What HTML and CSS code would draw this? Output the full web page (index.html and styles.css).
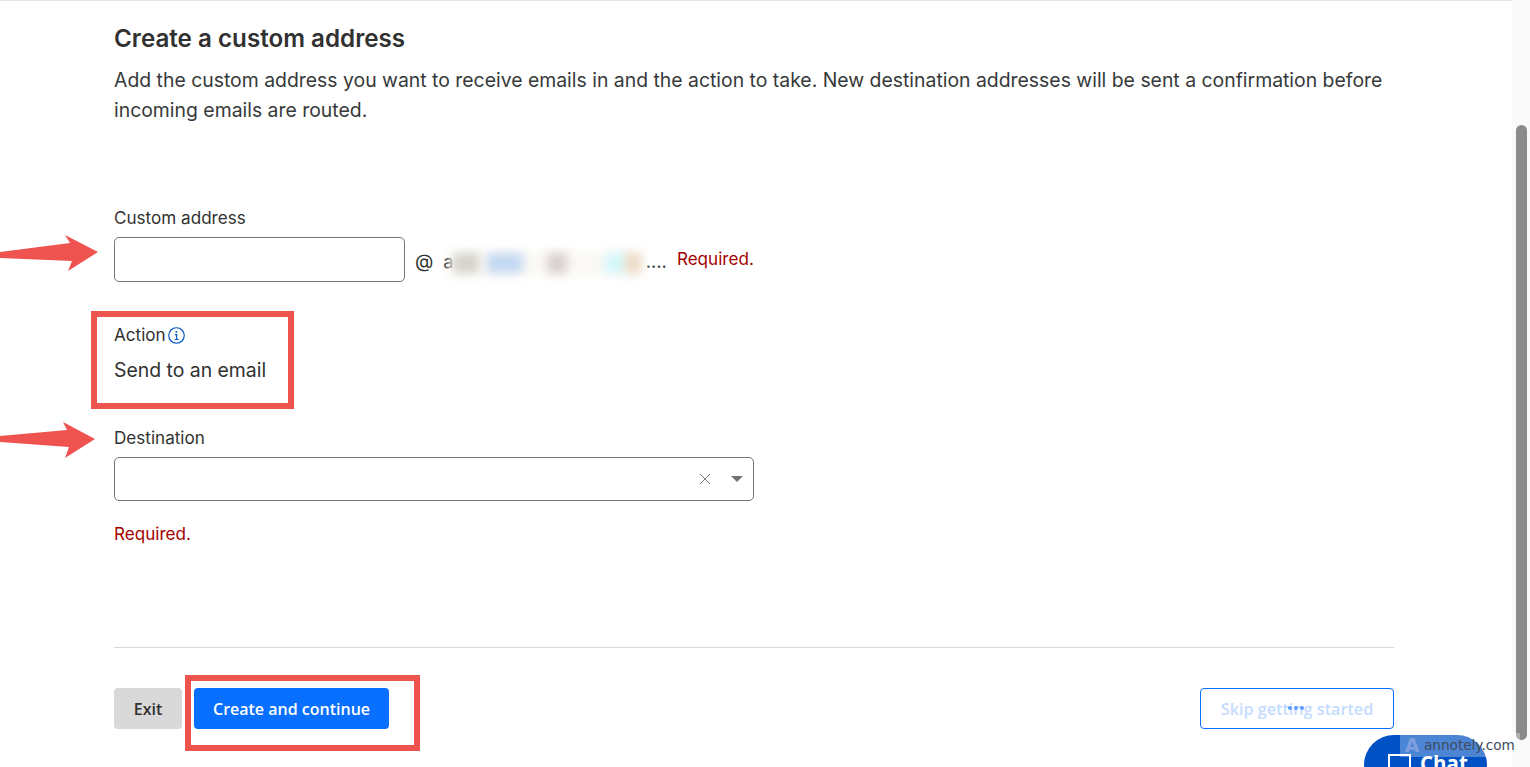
FILE: index.html
```html
<!DOCTYPE html>
<html lang="en">

<head>
    <meta charset="UTF-8">
    <meta name="viewport" content="width=device-width, initial-scale=1.0">
    <title>Create a custom address</title>
    <link rel="stylesheet" href="styles.css">
</head>

<body>
    <div class="page">
        <main class="content">
            <h2 class="title">Create a custom address</h2>
            <p class="intro">Add the custom address you want to receive emails in and the action to take. New destination addresses will be sent a confirmation before incoming emails are routed.</p>

            <div class="field-custom">
                <label class="label" for="custom">Custom address</label>
                <div class="address-row">
                    <input class="input" id="custom" type="text">
                    <span class="at">@</span>
                    <span class="domain">a<span class="smudges">
                        <i class="smudge s0"></i><i class="smudge s1"></i><i class="smudge s2"></i><i class="smudge s3"></i><i class="smudge s4"></i><i class="smudge s5"></i>
                    </span>....</span>
                    <span class="error error-inline">Required.</span>
                </div>
            </div>

            <div class="field-action">
                <div class="label action-label">Action
                    <svg class="info" viewBox="0 0 16 16" width="17" height="17" fill="none" stroke="#0051c3">
                        <circle cx="8" cy="8" r="7.3" stroke-width="1.1" />
                        <path d="M6.4 7.1H8.2V11.6M6.2 11.8H10" stroke-width="1.1" />
                        <circle cx="7.9" cy="4.6" r="0.9" fill="#0051c3" stroke="none" />
                    </svg>
                </div>
                <div class="action-value">Send to an email</div>
            </div>

            <div class="field-destination">
                <div class="label">Destination</div>
                <div class="select">
                    <svg class="clear" viewBox="0 0 12 12" width="12" height="12" stroke="#7b7b7b" stroke-width="1">
                        <path d="M1 1L11 11M11 1L1 11" />
                    </svg>
                    <span class="caret"></span>
                </div>
                <div class="error error-block">Required.</div>
            </div>

            <div class="actions">
                <button class="btn btn-exit" type="button">Exit</button>
                <button class="btn btn-create" type="button">Create and continue</button>
                <button class="btn btn-skip" type="button">Skip getting started
                    <span class="dots"><i></i><i></i><i></i></span>
                </button>
            </div>
        </main>

        <div class="scrollbar"><div class="thumb"></div></div>
    </div>

    <!-- annotations drawn over the screenshot -->
    <svg class="arrow arrow-1" viewBox="0 0 100 38" width="100" height="38">
        <path d="M0 17L70 8L65 0L98 17L68 36L72 26L0 23Z" fill="#ef5350" />
    </svg>
    <svg class="arrow arrow-2" viewBox="0 0 95 38" width="95" height="38">
        <path d="M0 14L67 8L63 0L95 17L65 36L69 25L0 20Z" fill="#ef5350" />
    </svg>
    <div class="box box-action"></div>
    <div class="box box-create"></div>

    <button class="chat" type="button">
        <span class="chat-icon"></span>Chat
    </button>
    <div class="watermark">
        <span class="watermark-logo">A</span>annotely.com
    </div>
</body>

</html>
```

FILE: styles.css
```css
* {
    box-sizing: border-box;
}

html,
body {
    margin: 0;
    height: 100%;
    overflow: hidden;
}

body {
    background: #fff;
    color: #313131;
    font-family: Inter, "Liberation Sans", sans-serif;
}

.page {
    display: flex;
    height: 767px;
}

.content {
    flex: 1;
    padding: 0 118px 0 114px;
    border-top: 1px solid #e5e5e5;
}

.title {
    margin: 23px 0 0;
    font-size: 24.2px;
    line-height: 30px;
    font-weight: 600;
}

.intro {
    margin: 11px 0 0;
    font-size: 19.4px;
    line-height: 30px;
    color: #36393a;
}

.label {
    font-size: 17.1px;
    line-height: 20px;
}

.field-custom {
    margin-top: 83px;
}

.address-row {
    display: flex;
    align-items: center;
    margin-top: 9px;
}

.input {
    width: 291px;
    height: 45px;
    border: 1px solid #757575;
    border-radius: 5px;
    background: #fff;
}

.at {
    margin: 4px 0 0 10px;
    font-size: 19px;
}

.domain {
    margin: 6px 0 0 10px;
    font-size: 18.4px;
    color: #36393a;
}

.smudges {
    display: inline-block;
    position: relative;
    width: 197px;
    height: 24px;
    margin-left: -5px;
    vertical-align: middle;
}

.smudge {
    position: absolute;
    top: 2px;
    height: 20px;
    filter: blur(5px);
}

.s0 { left: 2px; width: 192px; top: 1px; height: 24px; background: #fbf9f5; }
.s1 { left: 4px; width: 26px; background: #d5d3cb; }
.s2 { left: 38px; width: 36px; background: #c3d8f2; }
.s3 { left: 98px; width: 20px; background: #d8cfcf; }
.s4 { left: 156px; width: 22px; background: #d4f7fa; }
.s5 { left: 176px; width: 16px; background: #ecdcc6; }

.error {
    color: #a30000;
    font-size: 17.1px;
    line-height: 20px;
}

.error-inline {
    margin: -2px 0 0 10px;
}

.field-action {
    margin-top: 43px;
}

.action-label {
    display: flex;
    align-items: center;
    gap: 2px;
}

.action-value {
    margin-top: 12px;
    font-size: 19.4px;
    line-height: 26px;
}

.field-destination {
    margin-top: 45px;
}

.select {
    display: flex;
    align-items: center;
    justify-content: flex-end;
    width: 640px;
    height: 44px;
    margin-top: 9px;
    padding-right: 10px;
    border: 1px solid #757575;
    border-radius: 5px;
}

.clear {
    margin-right: 20px;
}

.caret {
    width: 0;
    height: 0;
    border-left: 6px solid transparent;
    border-right: 6px solid transparent;
    border-top: 6px solid #6f7378;
}

.error-block {
    margin-top: 23px;
}

.actions {
    display: flex;
    align-items: center;
    margin-top: 103px;
    padding-top: 40px;
    border-top: 1px solid #d9d9d9;
}

.btn {
    height: 41px;
    border-radius: 4px;
    font-family: "Open Sans", "Liberation Sans", sans-serif;
    font-size: 16px;
    font-weight: 600;
}

.btn-exit {
    width: 68px;
    border: 0;
    background: #d9d9d9;
    color: #313131;
}

.btn-create {
    width: 195px;
    margin-left: 12px;
    border: 0;
    background: #086fff;
    color: #fff;
}

.btn-skip {
    position: relative;
    width: 194px;
    margin-left: auto;
    border: 1px solid #086fff;
    background: #fff;
    color: #c4dcff;
    font-size: 16.2px;
}

.dots {
    position: absolute;
    top: 17px;
    left: 87px;
    display: flex;
    gap: 2px;
}

.dots i {
    width: 4px;
    height: 4px;
    border-radius: 50%;
    background: #5a9bff;
}

.scrollbar {
    width: 18px;
    padding: 125px 3px 27px 4px;
    background: #fafafa;
}

.thumb {
    height: 100%;
    border-radius: 6px;
    background: #8b8b8b;
}

.arrow {
    position: absolute;
}

.arrow-1 {
    left: 0;
    top: 235px;
}

.arrow-2 {
    left: 0;
    top: 422px;
}

.box {
    position: absolute;
    border: 6px solid #ef5350;
}

.box-action {
    left: 91px;
    top: 311px;
    width: 203px;
    height: 98px;
}

.box-create {
    left: 185px;
    top: 675px;
    width: 235px;
    height: 76px;
}

.chat {
    position: absolute;
    left: 1364px;
    top: 735px;
    width: 123px;
    height: 60px;
    padding: 16px 0 0 24px;
    display: flex;
    align-items: flex-start;
    gap: 9px;
    border: 0;
    border-radius: 30px;
    background: #0051c3;
    color: #fff;
    font-family: "Open Sans", "Liberation Sans", sans-serif;
    font-size: 20.5px;
    font-weight: 700;
    line-height: 24px;
}

.chat-icon {
    width: 23px;
    height: 24px;
    margin-top: 3px;
    border: 2px solid #fff;
}

.watermark {
    position: absolute;
    left: 1400px;
    top: 733px;
    width: 120px;
    height: 24px;
    display: flex;
    align-items: center;
    background: rgba(255, 255, 255, 0.3);
    color: #3d4a5c;
    font-family: "DejaVu Sans", sans-serif;
    font-size: 13.6px;
}

.watermark-logo {
    width: 24px;
    color: #7d9fe0;
    font-size: 19px;
    font-weight: 700;
    text-align: center;
}
```
